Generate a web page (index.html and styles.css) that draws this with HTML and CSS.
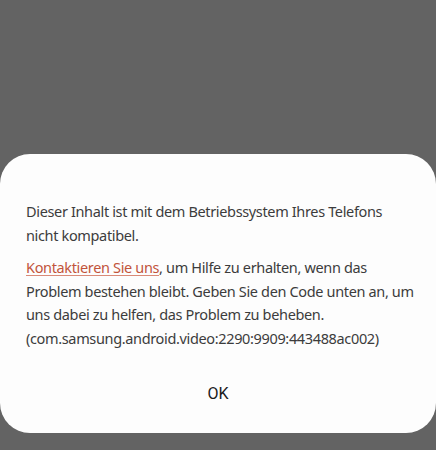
FILE: index.html
```html
<!DOCTYPE html>
<html>
<head>
<meta charset="utf-8">
<link rel="stylesheet" href="styles.css">
</head>
<body>
<div class="screen">
  <div class="dialog">
    <div class="body">
      <p class="msg first">Dieser Inhalt ist mit dem Betriebssystem Ihres Telefons nicht kompatibel.</p>
      <p class="msg second"><a class="link">Kontaktieren Sie uns</a>, um Hilfe zu erhalten, wenn das Problem bestehen bleibt. Geben Sie den Code unten an, um uns dabei zu helfen, das Problem zu beheben.<br>(com.samsung.android.video:2290:9909:443488ac002)</p>
    </div>
    <div class="actions"><span class="ok">OK</span></div>
  </div>
</div>
</body>
</html>
```
FILE: styles.css
```css
html, body {
  margin: 0;
  padding: 0;
  background: #636363;
}
.screen {
  width: 436px;
  height: 450px;
  display: flex;
  flex-direction: column;
  justify-content: flex-end;
  padding-bottom: 17px;
  box-sizing: border-box;
}
.dialog {
  background: #fdfdfd;
  border-radius: 30px;
  height: 279px;
  box-sizing: border-box;
  padding: 46px 20px 0 26px;
  display: flex;
  flex-direction: column;
}
.body {
  font-family: "Noto Sans", sans-serif;
  font-size: 14.5px;
  letter-spacing: -0.35px;
  color: #3c3c3c;
}
.msg {
  margin: 0;
  line-height: 23.5px;
}
.second {
  margin-top: 9px;
}
.link {
  color: #c2543b;
  text-decoration: underline;
  text-decoration-color: #d98a78;
  text-underline-offset: 2px;
}
.actions {
  display: flex;
  justify-content: center;
  margin-top: 34px;
  padding-right: 0;
}
.ok {
  font-family: "Roboto", sans-serif;
  font-size: 16px;
  color: #1a1a1a;
  margin-left: -6px;
}
```
